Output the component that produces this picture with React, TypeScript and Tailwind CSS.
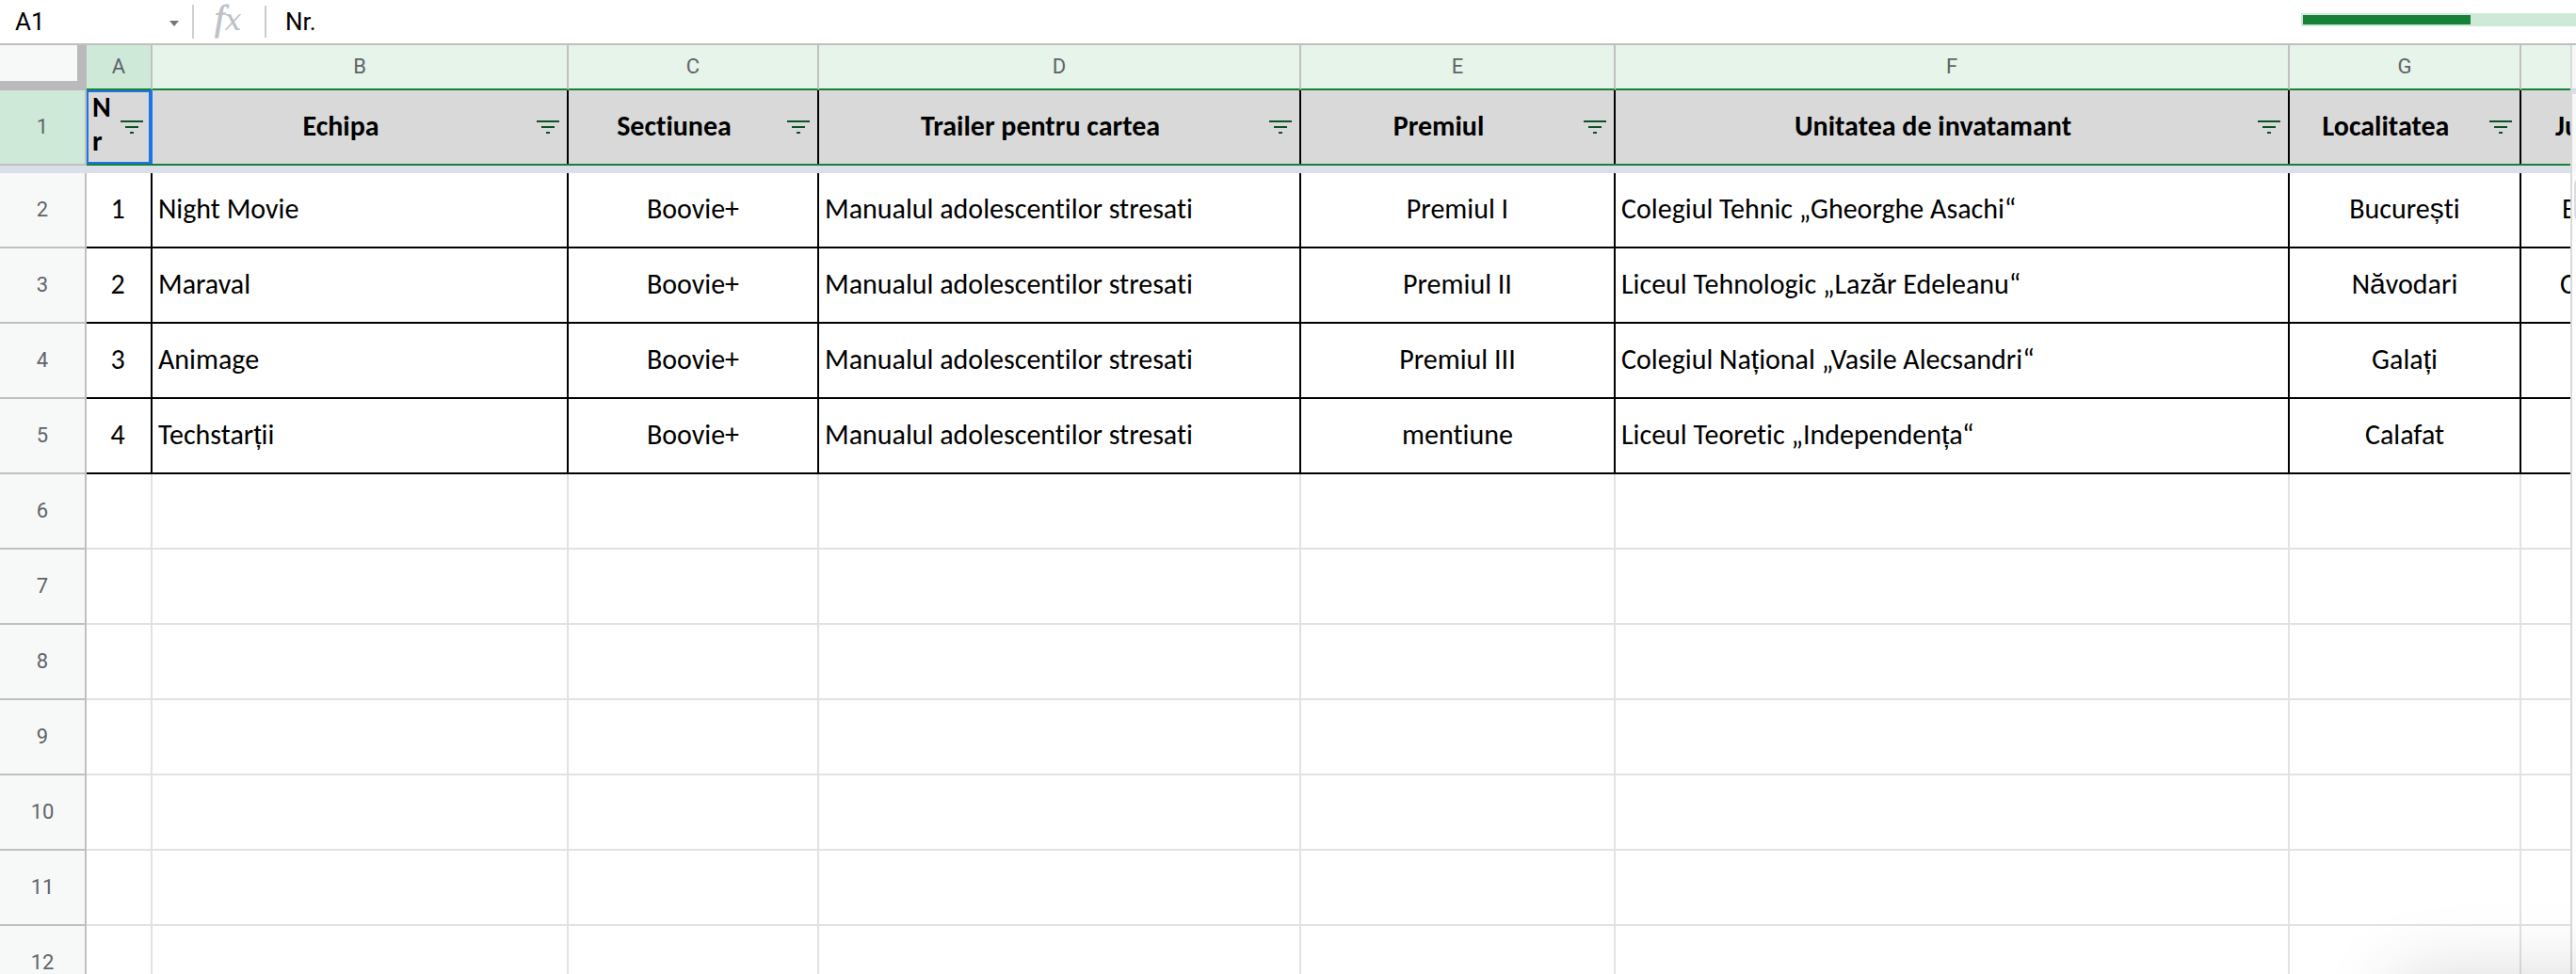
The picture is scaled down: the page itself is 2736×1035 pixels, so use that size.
import clsx from 'clsx';

type Row = string[];

const HEADERS = [
  'Nr',
  'Echipa',
  'Sectiunea',
  'Trailer pentru cartea',
  'Premiul',
  'Unitatea de invatamant',
  'Localitatea',
  'Ju',
];

const LETTERS = ['A', 'B', 'C', 'D', 'E', 'F', 'G', ''];

const ROWS: Row[] = [
  ['1', 'Night Movie', 'Boovie+', 'Manualul adolescentilor stresati', 'Premiul I', 'Colegiul Tehnic „Gheorghe Asachi“', 'București', 'B'],
  ['2', 'Maraval', 'Boovie+', 'Manualul adolescentilor stresati', 'Premiul II', 'Liceul Tehnologic „Lazăr Edeleanu“', 'Năvodari', 'C'],
  ['3', 'Animage', 'Boovie+', 'Manualul adolescentilor stresati', 'Premiul III', 'Colegiul Național „Vasile Alecsandri“', 'Galați', ''],
  ['4', 'Techstarții', 'Boovie+', 'Manualul adolescentilor stresati', 'mentiune', 'Liceul Teoretic „Independența“', 'Calafat', ''],
];

const EMPTY_ROWS = [6, 7, 8, 9, 10, 11, 12];

const GRID = 'grid grid-cols-[92px_70px_442px_266px_512px_334px_716px_246px_52px]';
const CELL_FONT = 'font-[Carlito,Lato,sans-serif] text-[30px] leading-9 text-black [font-variant-ligatures:none]';

const isLeft = (col: number) => col === 1 || col === 3 || col === 5;

// Romanian letters use the fallback sans, the rest stays in the cell font
const CellText = ({text}: {text: string}) => (
  <span>
    {text.split(/([ășț])/).map((part, i) =>
      i % 2 ? (
        <span key={i} className="font-['Liberation_Sans',sans-serif] leading-none">
          {part}
        </span>
      ) : (
        part
      ),
    )}
  </span>
);

const FilterIcon = () => (
  <svg width="24" height="14" viewBox="0 0 24 14" fill="#0d5122" className="shrink-0" shapeRendering="crispEdges">
    <rect width="24" height="2" />
    <rect x="5" y="6" width="14" height="2" />
    <rect x="10" y="12" width="4" height="2" />
  </svg>
);

const FormulaBar = () => (
  <div className="flex h-12 items-center border-b-2 border-[#c0c0c0] text-[26px] text-black">
    <div className="flex w-[204px] items-center justify-between pl-4 pr-3.5">
      <span>A1</span>
      <svg width="10" height="6" viewBox="0 0 10 6" fill="#777" className="mt-1">
        <path d="M0 0h10L5 6z" />
      </svg>
    </div>
    <div className="h-9 w-0.5 bg-[#d0d0d0]" />
    <div className="flex w-[75px] items-baseline pb-2 pl-[22px] italic leading-none text-[#bdc1c6]">
      <span className="font-['Liberation_Serif',serif] text-[38px] [-webkit-text-stroke:0.8px_#bdc1c6]">f</span>
      <span className="font-['DejaVu_Serif',serif] text-[32px]">x</span>
    </div>
    <div className="h-[34px] w-0.5 bg-[#ccc]" />
    <span className="pl-5">Nr.</span>
    <div className="mb-1 ml-auto flex h-3.5 w-[292px] bg-[#cee9d8] py-0.5 pl-0.5">
      <div className="w-[178px] bg-[#188038]" />
    </div>
  </div>
);

const RowNumber = ({value, active}: {value: number; active?: boolean}) => (
  <div
    className={clsx(
      'flex items-center justify-center border-b-2 border-r-2 border-[#c0c0c0] pb-0.5 text-[22px] text-[#5f6368]',
      active ? 'bg-[#cee9d8]' : 'bg-[#f7f9f8]',
    )}
  >
    {value}
  </div>
);

const ColumnLetters = () => (
  <div className={clsx(GRID, 'h-12')}>
    <div className="border-b-[10px] border-r-[10px] border-[#bababa] bg-[#f7f9f8]" />
    {LETTERS.map((letter, col) => (
      <div
        key={col}
        className={clsx(
          'flex items-center justify-center border-b-2 border-b-[#188038] pb-0.5 text-[22px] text-[#5f6368]',
          col === 0 ? 'bg-[#cee9d8]' : 'bg-[#e6f4ea]',
          col < 7 && 'border-r-2 border-r-[#c0c0c0]',
        )}
      >
        {letter}
      </div>
    ))}
  </div>
);

const HeaderRow = () => (
  <div className={clsx(GRID, 'h-20')}>
    <RowNumber value={1} active />
    {HEADERS.map((title, col) => (
      <div key={col} className={clsx('border-b-2 border-[#188038] bg-[#d9d9d9]', CELL_FONT)}>
        <div
          className={clsx(
            'flex h-full items-center font-bold',
            col === 0 && 'border-2 border-r-4 border-[#1a73e8] pr-1.5',
            col > 0 && col < 7 && 'border-r-2 border-black pr-2',
            col === 7 && 'overflow-hidden pl-9',
          )}
        >
          <span
            className={clsx(
              col === 0 ? 'w-[26px] shrink-0 -translate-y-[3px] break-all pl-1' : 'pb-0.5',
              col > 0 && col < 7 && 'flex-1 pr-2 text-center',
            )}
          >
            {title}
          </span>
          {col < 7 && (
            <span className={clsx(col === 0 && 'ml-auto')}>
              <FilterIcon />
            </span>
          )}
        </div>
      </div>
    ))}
  </div>
);

const DataRow = ({row, index}: {row: Row; index: number}) => (
  <div className={clsx(GRID, 'h-20')}>
    <RowNumber value={index + 2} />
    {row.map((text, col) => (
      <div
        key={col}
        className={clsx(
          'flex items-center overflow-hidden whitespace-nowrap border-b-2 border-black pb-0.5',
          CELL_FONT,
          col < 7 && 'border-r-2',
          col === 0 && 'pr-0.5',
          col === 7 ? (text === 'B' ? 'pl-[43px]' : 'pl-[41px]') : isLeft(col) ? 'pl-1.5' : 'justify-center',
        )}
      >
        <CellText text={text} />
      </div>
    ))}
  </div>
);

const EmptyRow = ({value}: {value: number}) => (
  <div className={clsx(GRID, 'h-20')}>
    <RowNumber value={value} />
    {LETTERS.map((_, col) => (
      <div key={col} className={clsx('border-b-2 border-[#e1e2e3]', col < 7 && 'border-r-2')} />
    ))}
  </div>
);

const Scrollbar = () => (
  <div className="flex-1 overflow-hidden border-l-2 border-[#d9d9d9]">
    <div className="h-12 border-b-2 border-[#d9d9d9] bg-[#f8f8f8]" />
    <div className="h-1 bg-[#dadfe9]" />
    <div className="h-[84px] bg-[#f8f8f8]" />
    <div className="ml-0.5 mt-1 h-12 w-4 rounded-full bg-[#dadce0]" />
  </div>
);

export default function App() {
  return (
    <div className="relative flex h-[1035px] w-[2736px] flex-col overflow-hidden bg-white font-[Roboto,sans-serif]">
      <FormulaBar />
      <div className="flex h-[987px]">
        <div className="w-[2730px] overflow-hidden">
          <ColumnLetters />
          <HeaderRow />
          <div className="h-2 bg-[#dadfe9]" />
          {ROWS.map((row, i) => (
            <DataRow key={i} row={row} index={i} />
          ))}
          {EMPTY_ROWS.map((n) => (
            <EmptyRow key={n} value={n} />
          ))}
        </div>
        <Scrollbar />
      </div>
      {/* shadow of the panel below the fold */}
      <div className="pointer-events-none absolute -right-40 top-[1060px] h-40 w-[330px] shadow-[0_0_80px_20px_rgba(0,0,0,0.17)]" />
    </div>
  );
}
